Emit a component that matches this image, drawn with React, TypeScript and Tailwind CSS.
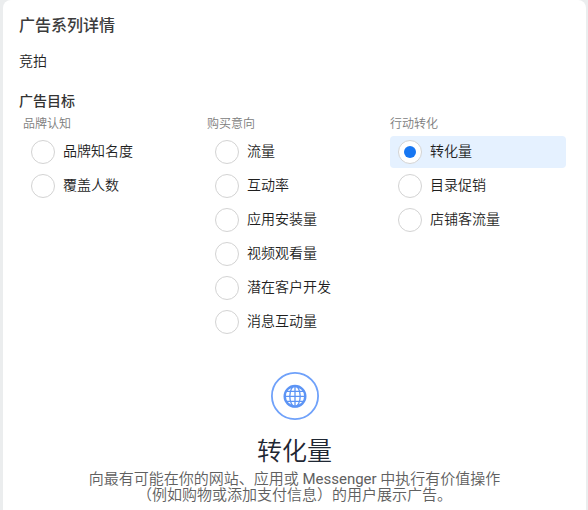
import clsx from "clsx";

const columns = [
  { title: "品牌认知", items: ["品牌知名度", "覆盖人数"] },
  {
    title: "购买意向",
    items: ["流量", "互动率", "应用安装量", "视频观看量", "潜在客户开发", "消息互动量"],
  },
  { title: "行动转化", items: ["转化量", "目录促销", "店铺客流量"] },
];

const selected = "转化量";

function Radio({ checked }: { checked: boolean }) {
  return (
    <span className="flex size-6 shrink-0 items-center justify-center rounded-full border border-[#d3d3d3] bg-white">
      {checked && <span className="size-3 rounded-full bg-[#1877f2]" />}
    </span>
  );
}

function Objective({ label }: { label: string }) {
  const checked = label === selected;
  return (
    <li
      className={clsx(
        "flex h-8 items-center gap-2 rounded-[4px] pl-2 text-[14px]",
        checked && "bg-[#e5f1ff]"
      )}
    >
      <Radio checked={checked} />
      <span className="pb-0.5">{label}</span>
    </li>
  );
}

function GlobeBadge() {
  return (
    <svg className="size-12" viewBox="0 0 48 48" fill="none" stroke="#5c94f5">
      <circle cx="24" cy="24" r="23.1" stroke="#6fa1fa" strokeWidth="1.8" />
      <circle cx="24" cy="24.3" r="10.3" strokeWidth="2.4" />
      <g strokeWidth="1.3">
        <ellipse cx="24" cy="24.3" rx="5.2" ry="10.4" />
        <path d="M24 14v20.6M13.6 24.3h20.8M15 19.3h18M15 29.3h18" />
      </g>
    </svg>
  );
}

export default function App() {
  return (
    <div className="h-[510px] overflow-hidden bg-[#ebedee] pl-[3px] pr-[2px] font-[Roboto,'Noto_Sans_CJK_SC',sans-serif] font-[350] text-[#1f1f1f]">
      <div className="h-[530px] rounded-lg bg-white px-4 pt-[13px]">
        <h1 className="h-[26px] text-[16px] leading-[26px] font-medium text-[#3c3c3c]">广告系列详情</h1>
        <p className="mt-[12px] h-5 text-[14px] leading-5">竞拍</p>
        <h2 className="mt-[20px] h-5 text-[14px] leading-5 font-medium text-[#333333]">广告目标</h2>
        <div className="mt-[5px] grid grid-cols-[184px_183px_176px] pl-1">
          {columns.map((col) => (
            <div key={col.title}>
              <h3 className="h-4 text-[12px] leading-4 text-[#7c7c7c]">{col.title}</h3>
              <ul className="mt-1 space-y-0.5">
                {col.items.map((item) => (
                  <Objective key={item} label={item} />
                ))}
              </ul>
            </div>
          ))}
        </div>
        <div className="mt-[34px] flex flex-col items-center">
          <GlobeBadge />
          <div className="mt-[16px] text-[25px] leading-8 text-[#1f2733]">转化量</div>
          <p className="mt-[3px] text-center text-[15px] leading-4 text-[#606060]">
            向最有可能在你的网站、应用或 <span className="font-normal">Messenger</span> 中执行有价值操作
            <br />
            （例如购物或添加支付信息）的用户展示广告。
          </p>
        </div>
      </div>
    </div>
  );
}
